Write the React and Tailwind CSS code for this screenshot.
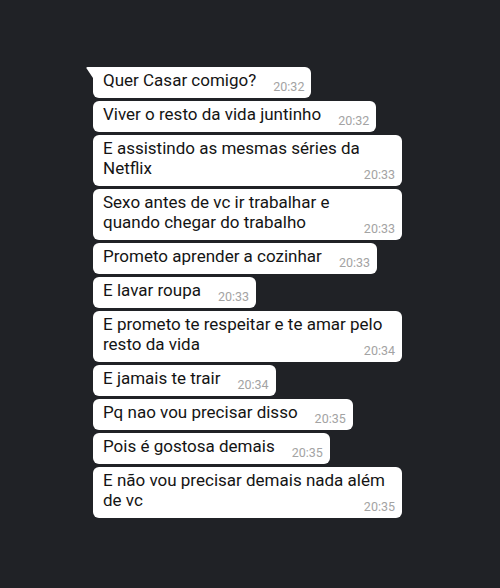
import React from 'react';

const messages = [
  { lines: ['Quer Casar comigo?'], time: '20:32', tail: true },
  { lines: ['Viver o resto da vida juntinho'], time: '20:32' },
  { lines: ['E assistindo as mesmas séries da', 'Netflix'], time: '20:33' },
  { lines: ['Sexo antes de vc ir trabalhar e', 'quando chegar do trabalho'], time: '20:33' },
  { lines: ['Prometo aprender a cozinhar'], time: '20:33' },
  { lines: ['E lavar roupa'], time: '20:33' },
  { lines: ['E prometo te respeitar e te amar pelo', 'resto da vida'], time: '20:34' },
  { lines: ['E jamais te trair'], time: '20:34' },
  { lines: ['Pq nao vou precisar disso'], time: '20:35' },
  { lines: ['Pois é gostosa demais'], time: '20:35' },
  { lines: ['E não vou precisar demais nada além', 'de vc'], time: '20:35' },
];

const Tail = () => (
  <svg className="absolute -left-[7px] top-0" width="8" height="13" viewBox="0 0 8 13">
    <path d="M8 0 H1.5 C0.4 0 0 1 0.8 1.8 L8 12.5 Z" fill="#ffffff" />
  </svg>
);

const Bubble = ({ lines, time, tail }) => {
  const multi = lines.length > 1;
  return (
    <div
      className={`relative bg-white rounded-[6px] pl-[10px] pr-[7px] pt-[3px] pb-[5px] ${
        tail ? 'rounded-tl-none' : ''
      } ${multi ? 'w-[309px]' : ''}`}
    >
      {tail && <Tail />}
      {multi ? (
        <div className="flex flex-col">
          <div className="text-[17px] leading-[20px] pb-[3px] text-[#141414]">
            {lines.map((l, i) => (
              <div key={i}>{l}</div>
            ))}
          </div>
          <div className="self-end -mt-[12px] text-[12.5px] leading-[12px] text-[#a3a3a3]">{time}</div>
        </div>
      ) : (
        <div className="flex items-end">
          <span className="text-[17px] leading-[20px] pb-[3px] text-[#141414] whitespace-nowrap">{lines[0]}</span>
          <span className="ml-[17px] text-[12.5px] leading-[12px] text-[#a3a3a3]">{time}</span>
        </div>
      )}
    </div>
  );
};

export default function App() {
  return (
    <div
      className="w-[500px] h-[588px] bg-[#202226] pl-[93px] pt-[67px] overflow-hidden"
      style={{ fontFamily: 'Roboto, "Noto Sans", sans-serif' }}
    >
      <div className="flex flex-col items-start gap-[3px]">
        {messages.map((m, i) => (
          <Bubble key={i} {...m} />
        ))}
      </div>
    </div>
  );
}
